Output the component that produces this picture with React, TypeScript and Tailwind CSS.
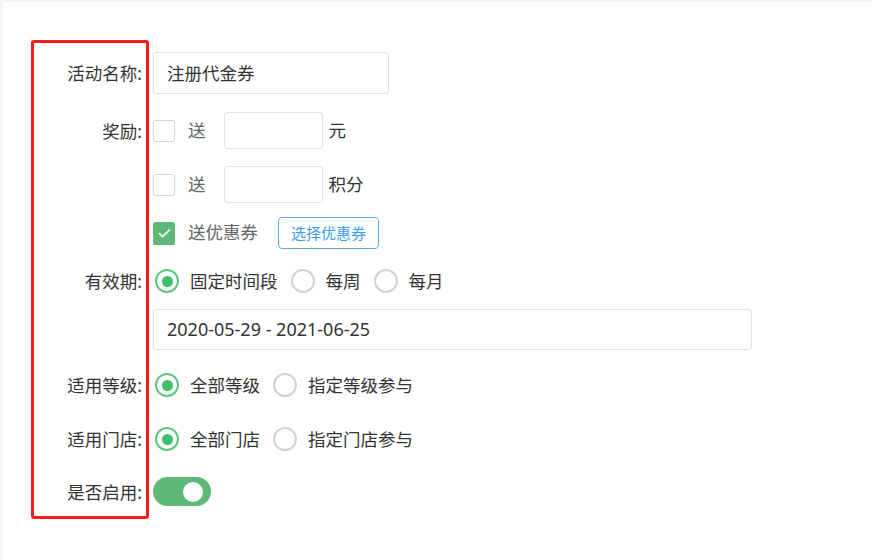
import { Check } from "lucide-react";

const font = "font-['Noto_Sans','Noto_Sans_CJK_SC',sans-serif]";

function Label({ text }: { text: string }) {
  return (
    <div className="w-[140px] shrink-0 pt-[2px] text-right text-[17.5px] leading-none text-[#333] pr-[1px]">
      {text}:
    </div>
  );
}

function CheckBox({ checked = false }: { checked?: boolean }) {
  return checked ? (
    <span className="flex h-[23px] w-[22px] items-center justify-center rounded-[2px] bg-[#5fb878]">
      <Check className="h-[15px] w-[15px] text-white" strokeWidth={2.5} />
    </span>
  ) : (
    <span className="block h-[22px] w-[22px] rounded-[2px] border border-[#d6d6d6] bg-white" />
  );
}

function Radio({ checked = false, label }: { checked?: boolean; label: string }) {
  return (
    <div className="flex items-center">
      <span
        className={
          checked
            ? "flex h-[24px] w-[24px] items-center justify-center rounded-full border-2 border-[#5fc77f]"
            : "block h-[24px] w-[24px] rounded-full border-2 border-[#d2d2d2]"
        }
      >
        {checked && <span className="h-[11px] w-[11px] rounded-full bg-[#3fbf6a]" />}
      </span>
      <span className="ml-[11px] pt-[2px] text-[17.5px] leading-none text-[#333]">{label}</span>
    </div>
  );
}

export default function App() {
  return (
    <div className={`relative h-[560px] w-[872px] overflow-hidden border-l-[3px] border-t-2 border-[#f4f4f4] bg-white ${font}`}>
      <div className="flex flex-col">
        {/* 活动名称 */}
        <div className="mt-[50px] flex h-[42px] items-center">
          <Label text="活动名称" />
          <div className="ml-[10px] flex h-full w-[236px] items-center rounded-[3px] border border-[#e2e2e2] pl-[13px] text-[17.5px] text-[#333]">
            注册代金券
          </div>
        </div>

        {/* 奖励 */}
        <div className="mt-[18px] flex h-[37px] items-center">
          <Label text="奖励" />
          <div className="ml-[10px] flex h-full items-center">
            <CheckBox />
            <span className="ml-[13px] text-[17.5px] leading-none text-[#666]">送</span>
            <span className="ml-[18px] block h-full w-[99px] rounded-[3px] border border-[#e2e2e2]" />
            <span className="ml-[6px] text-[17.5px] leading-none text-[#333]">元</span>
          </div>
        </div>

        <div className="mt-[17px] flex h-[37px] items-center">
          <div className="w-[140px] shrink-0" />
          <div className="ml-[10px] flex h-full items-center">
            <CheckBox />
            <span className="ml-[13px] text-[17.5px] leading-none text-[#666]">送</span>
            <span className="ml-[18px] block h-full w-[99px] rounded-[3px] border border-[#e2e2e2]" />
            <span className="ml-[6px] text-[17.5px] leading-none text-[#333]">积分</span>
          </div>
        </div>

        <div className="mt-[14px] flex h-[32px] items-center">
          <div className="w-[140px] shrink-0" />
          <div className="ml-[10px] flex h-full items-center">
            <CheckBox checked />
            <span className="ml-[13px] text-[17.5px] leading-none text-[#666]">送优惠券</span>
            <button className="ml-[20px] flex h-full w-[101px] items-center justify-center rounded-[4px] border border-[#58aef5] text-[15px] leading-none text-[#3a9ff0]">
              选择优惠券
            </button>
          </div>
        </div>

        {/* 有效期 */}
        <div className="mt-[18px] flex h-[28px] items-center">
          <Label text="有效期" />
          <div className="ml-[12px] flex h-full items-center gap-[13px]">
            <Radio checked label="固定时间段" />
            <Radio label="每周" />
            <Radio label="每月" />
          </div>
        </div>

        <div className="mt-[14px] flex h-[41px] items-center">
          <div className="w-[140px] shrink-0" />
          <div className="ml-[10px] flex h-full w-[599px] items-center rounded-[3px] border border-[#e2e2e2] pl-[13px] text-[18px] text-[#333]">
            2020-05-29 - 2021-06-25
          </div>
        </div>

        {/* 适用等级 */}
        <div className="mt-[21px] flex h-[28px] items-center">
          <Label text="适用等级" />
          <div className="ml-[12px] flex h-full items-center gap-[13px]">
            <Radio checked label="全部等级" />
            <Radio label="指定等级参与" />
          </div>
        </div>

        {/* 适用门店 */}
        <div className="mt-[26px] flex h-[28px] items-center">
          <Label text="适用门店" />
          <div className="ml-[12px] flex h-full items-center gap-[13px]">
            <Radio checked label="全部门店" />
            <Radio label="指定门店参与" />
          </div>
        </div>

        {/* 是否启用 */}
        <div className="mt-[24px] flex h-[29px] items-center">
          <Label text="是否启用" />
          <div className="ml-[10px] flex h-full w-[58px] items-center justify-end rounded-full bg-[#5fb878] pr-[8px]">
            <span className="block h-[20px] w-[20px] rounded-full bg-white" />
          </div>
        </div>
      </div>

      {/* red annotation box */}
      <div className="pointer-events-none absolute left-[28px] top-[38px] h-[479px] w-[118px] rounded-[3px] border-[3px] border-[#f51c1c]" />
    </div>
  );
}
